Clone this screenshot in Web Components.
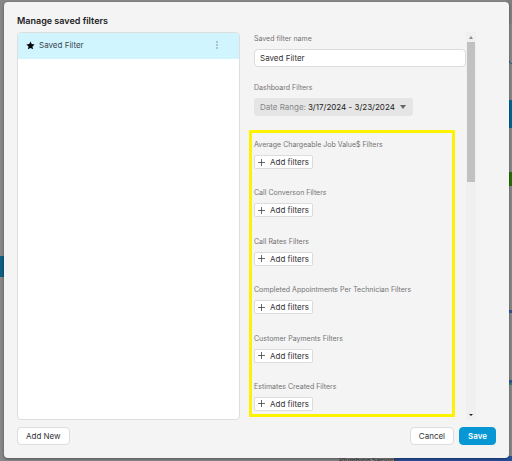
<!DOCTYPE html>
<html lang="en">
<head>
<meta charset="utf-8">
<title>Manage saved filters</title>
<style>
html, body { height: 100%; margin: 0; }
body { font-family: Inter, "Liberation Sans", sans-serif; font-size: 8px; color: #333; overflow: hidden; background: #888787; }
</style>
</head>
<body>
<filters-page></filters-page>
<script>
const define = (name, html, setup) => {
  const template = document.createElement('template');
  template.innerHTML = '<style>*{box-sizing:border-box}</style>' + html;
  customElements.define(name, class extends HTMLElement {
    constructor() {
      super();
      this.attachShadow({ mode: 'open' }).append(template.content.cloneNode(true));
    }
    connectedCallback() { if (setup) setup(this, this.shadowRoot); }
  });
};

// Dimmed dashboard visible around the dialog edges
define('dimmed-dashboard', `
<style>
:host { display: block; position: absolute; inset: 0; overflow: hidden; z-index: 0; }
i { position: absolute; right: 0; width: 6px; }
.nav { left: 0; top: 256px; height: 21px; background: #0e5f82; }
.blue { top: 100px; height: 28px; background: #05638f; }
.green { top: 172px; height: 14px; background: #286c08; }
.line { height: 3px; background: #34539a; }
.teal { top: 383px; height: 2px; background: #358068; }
.band { top: 0; height: 24px; background: #7f7f7f; }
.bar { bottom: 0; width: 118px; height: 5px; background: #27509c; }
.name { position: absolute; left: 339px; top: 456px; line-height: 10px; font-size: 7px; font-weight: 500; color: #444; white-space: nowrap; }
svg { position: absolute; right: 0; top: 58px; }
</style>
<i class="band"></i><i class="nav"></i><i class="blue"></i><i class="green"></i>
<i class="line" style="top:310px"></i><i class="line" style="top:380px"></i><i class="teal"></i>
<i class="bar"></i><span class="name">Plumbing Service</span>
<svg width="4" height="8" viewBox="0 0 4 8"><path d="M0 1 Q2 6 4 6" fill="none" stroke="#176382"/></svg>`);

define('app-button', `
<style>
:host { display: block; }
button { display: flex; align-items: center; justify-content: center; height: 18px; padding: 0 8px; font: inherit; line-height: 10px; color: #333; background: #fff; border: 1px solid #dcdcdc; border-radius: 4px; white-space: nowrap; }
:host([kind=primary]) button { background: #0797d5; border-color: #0797d5; color: #fff; font-weight: 600; }
:host([kind=add]) button { height: 14px; padding: 0 3px; gap: 5px; border-radius: 2px; }
svg { display: none; }
:host([kind=add]) svg { display: block; }
</style>
<button type="button"><svg width="7" height="7" viewBox="0 0 7 7" aria-hidden="true"><path d="M3.5 0v7M0 3.5h7" stroke="#444" stroke-width=".8"/></svg><slot></slot></button>`);

define('filter-list', `
<style>
:host { display: block; background: #fff; border: 1px solid #dedede; border-radius: 4px; overflow: hidden; }
.row { display: flex; align-items: center; height: 26px; padding: 0 17px 2px 8px; background: #d1f5ff; color: #3b484c; }
span { flex: 1; margin-left: 4px; line-height: 10px; }
button { display: flex; padding: 0 4px; border: 0; background: none; }
</style>
<div class="row">
<svg width="9" height="9" viewBox="0 0 24 24" aria-hidden="true"><path d="M12 1l3.3 7.2 7.7.9-5.7 5.3 1.5 7.8L12 18.4l-6.8 3.8 1.5-7.8L1 9.100l7.700-.9z" fill="#080808"/></svg>
<span>Saved Filter</span>
<button type="button" aria-label="Filter options"><svg width="2" height="8" viewBox="0 0 2 8"><g fill="#74878c"><circle cx="1" cy="1" r=".8"/><circle cx="1" cy="4" r=".8"/><circle cx="1" cy="7" r=".8"/></g></svg></button>
</div>`);

define('name-field', `
<style>
:host { display: block; }
label { display: block; font-size: 7px; line-height: 10px; color: #737373; margin-bottom: 5px; }
input { display: block; width: 100%; height: 18px; padding: 0 5px; font: inherit; color: #333; background: #fff; border: 1px solid #dcdcdc; border-radius: 4px; outline: 0; }
</style>
<label for="name">Saved filter name</label><input id="name" type="text" value="Saved Filter">`);

define('date-range', `
<style>
:host { display: block; }
h2 { margin: 0 0 5px; font-size: 7px; font-weight: 400; line-height: 10px; color: #737373; }
.box { display: flex; width: fit-content; align-items: center; height: 18px; padding: 0 7px 0 6px; background: #e5e5e5; border-radius: 3px; line-height: 10px; }
label { color: #858585; margin-right: 2px; }
select { appearance: none; border: 0; padding: 0; margin: 0 5px 0 0; background: none; font: inherit; color: #222; outline: 0; }
</style>
<h2>Dashboard Filters</h2>
<div class="box"><label for="range">Date Range:</label><select id="range"><option>3/17/2024 - 3/23/2024</option></select>
<svg width="6" height="4" viewBox="0 0 6 4" aria-hidden="true"><path d="M0 0h6L3 4z" fill="#666"/></svg></div>`);

define('filter-group', `
<style>
:host { display: flex; flex-direction: column; align-items: flex-start; gap: 5px; }
h2 { margin: 0; font-size: 7px; font-weight: 400; line-height: 10px; color: #737373; white-space: nowrap; }
</style>
<h2><slot></slot></h2><app-button kind="add">Add filters</app-button>`);

define('scroll-track', `
<style>
:host { display: flex; flex-direction: column; align-items: center; width: 10px; background: #f0f0f0; }
.thumb { width: 8px; height: 36%; background: #c1c1c1; }
svg { display: block; }
.down { margin-top: auto; }
</style>
<svg width="10" height="10" viewBox="0 0 10 10"><path d="M3 7h4L5 4z" fill="#8a8a8a"/></svg>
<div class="thumb"></div>
<svg class="down" width="10" height="10" viewBox="0 0 10 10"><path d="M3 4h4L5 6z" fill="#222"/></svg>`);

define('filter-editor', `
<style>
:host { display: flex; min-width: 0; min-height: 0; }
.content { flex: 1; min-width: 0; display: flex; flex-direction: column; padding: 2px 0 3px 1px; }
date-range { margin-top: 16px; }
.groups { flex: 1; display: flex; flex-direction: column; justify-content: space-between; margin: 14px 11px 0 -5px; padding: 7px 0 3px 2px; border: 3px solid #fff200; }
</style>
<div class="content">
<name-field></name-field>
<date-range></date-range>
<div class="groups">
<filter-group>Average Chargeable Job Value$ Filters</filter-group>
<filter-group>Call Converson Filters</filter-group>
<filter-group>Call Rates Filters</filter-group>
<filter-group>Completed Appointments Per Technician Filters</filter-group>
<filter-group>Customer Payments Filters</filter-group>
<filter-group>Estimates Created Filters</filter-group>
</div>
</div>
<scroll-track></scroll-track>`);

define('modal-dialog', `
<style>
:host { display: flex; flex-direction: column; padding: 13px; background: #f4f4f4; border-radius: 4px; box-shadow: 0 1px 3px #0006; }
h1 { margin: 0 0 5px; font-size: 9px; line-height: 12px; font-weight: 600; color: #222; }
.body { flex: 1; min-height: 0; display: grid; grid-template-columns: 1fr 1fr; gap: 13px; padding-right: 20px; }
footer { display: flex; gap: 5px; margin-top: 7px; }
.space { flex: 1; }
</style>
<h1>Manage saved filters</h1>
<div class="body"><slot></slot></div>
<footer><app-button>Add New</app-button><div class="space"></div><app-button>Cancel</app-button><app-button kind="primary">Save</app-button></footer>`,
el => { el.setAttribute('role', 'dialog'); el.setAttribute('aria-label', 'Manage saved filters'); });

define('filters-page', `
<style>
:host { position: relative; display: flex; height: 100vh; padding: 2px 3px 3px 4px; box-sizing: border-box; }
modal-dialog { flex: 1; min-width: 0; position: relative; box-sizing: border-box; }
</style>
<dimmed-dashboard></dimmed-dashboard>
<modal-dialog><filter-list></filter-list><filter-editor></filter-editor></modal-dialog>`);
</script>
</body>
</html>
